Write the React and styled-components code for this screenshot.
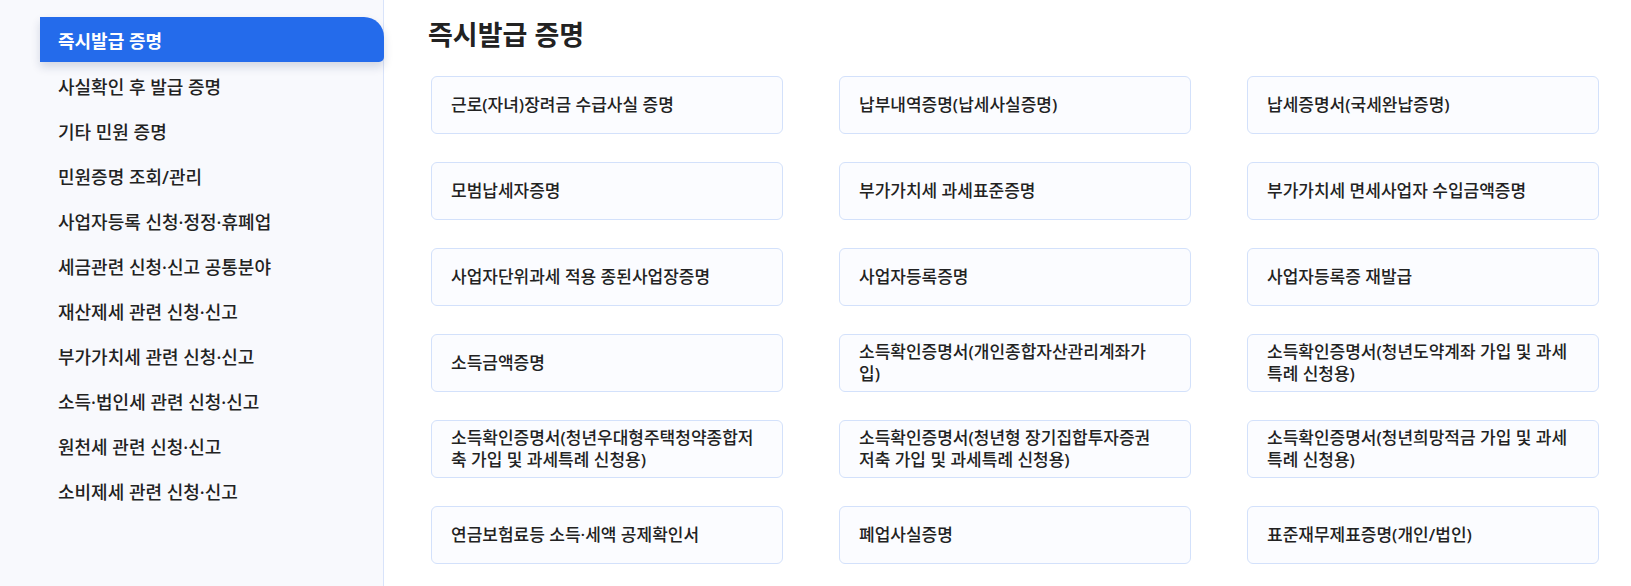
import styled, { createGlobalStyle } from "styled-components";

const menuItems = [
  "즉시발급 증명",
  "사실확인 후 발급 증명",
  "기타 민원 증명",
  "민원증명 조회/관리",
  "사업자등록 신청·정정·휴폐업",
  "세금관련 신청·신고 공통분야",
  "재산제세 관련 신청·신고",
  "부가가치세 관련 신청·신고",
  "소득·법인세 관련 신청·신고",
  "원천세 관련 신청·신고",
  "소비제세 관련 신청·신고",
];

const certificates = [
  "근로(자녀)장려금 수급사실 증명",
  "납부내역증명(납세사실증명)",
  "납세증명서(국세완납증명)",
  "모범납세자증명",
  "부가가치세 과세표준증명",
  "부가가치세 면세사업자 수입금액증명",
  "사업자단위과세 적용 종된사업장증명",
  "사업자등록증명",
  "사업자등록증 재발급",
  "소득금액증명",
  "소득확인증명서(개인종합자산관리계좌가입)",
  "소득확인증명서(청년도약계좌 가입 및 과세특례 신청용)",
  "소득확인증명서(청년우대형주택청약종합저축 가입 및 과세특례 신청용)",
  "소득확인증명서(청년형 장기집합투자증권저축 가입 및 과세특례 신청용)",
  "소득확인증명서(청년희망적금 가입 및 과세특례 신청용)",
  "연금보험료등 소득·세액 공제확인서",
  "폐업사실증명",
  "표준재무제표증명(개인/법인)",
];

const GlobalStyle = createGlobalStyle`
  html, body {
    margin: 0;
    padding: 0;
    background: #ffffff;
  }
  body {
    font-family: "Noto Sans", "Noto Sans CJK KR", sans-serif;
    color: #222222;
  }
`;

const Page = styled.div`
  display: flex;
  width: 1631px;
  height: 586px;
  overflow: hidden;
`;

const Sidebar = styled.nav`
  width: 384px;
  flex-shrink: 0;
  box-sizing: border-box;
  background: #f8f9fd;
  border-right: 1px solid #d8e3fa;
  padding: 17px 0 0 40px;
  display: flex;
  flex-direction: column;
`;

const MenuItem = styled.div`
  height: 45px;
  display: flex;
  align-items: center;
  padding-left: 18px;
  font-size: 18px;
  font-weight: ${(p) => (p.$active ? 700 : 500)};
  color: ${(p) => (p.$active ? "#ffffff" : "#222222")};
  background: ${(p) => (p.$active ? "#246beb" : "transparent")};
  border-radius: 0 20px 5px 0;
  margin-right: -1px;
  margin-bottom: ${(p) => (p.$active ? "1px" : "0")};
  box-shadow: ${(p) =>
    p.$active ? "0 5px 10px rgba(20, 40, 90, 0.16)" : "none"};
`;

const Main = styled.main`
  flex: 1;
  padding: 16px 0 0 47px;
`;

const Title = styled.h2`
  margin: 0 0 23px -3px;
  font-size: 27px;
  font-weight: 700;
  line-height: 37px;
  color: #222222;
`;

const Grid = styled.div`
  display: grid;
  grid-template-columns: repeat(3, 352px);
  column-gap: 56px;
  row-gap: 28px;
`;

const Card = styled.div`
  box-sizing: border-box;
  height: 58px;
  display: flex;
  align-items: center;
  padding: 0 26px 0 19px;
  background: #fbfcff;
  border: 1px solid #d3e1fb;
  border-radius: 6px;
  font-size: 17px;
  font-weight: 500;
  line-height: 22px;
  color: #222222;
`;

export default function App() {
  return (
    <>
      <GlobalStyle />
      <Page>
        <Sidebar>
          {menuItems.map((item, i) => (
            <MenuItem key={item} $active={i === 0}>
              {item}
            </MenuItem>
          ))}
        </Sidebar>
        <Main>
          <Title>즉시발급 증명</Title>
          <Grid>
            {certificates.map((c) => (
              <Card key={c}>{c}</Card>
            ))}
          </Grid>
        </Main>
      </Page>
    </>
  );
}
